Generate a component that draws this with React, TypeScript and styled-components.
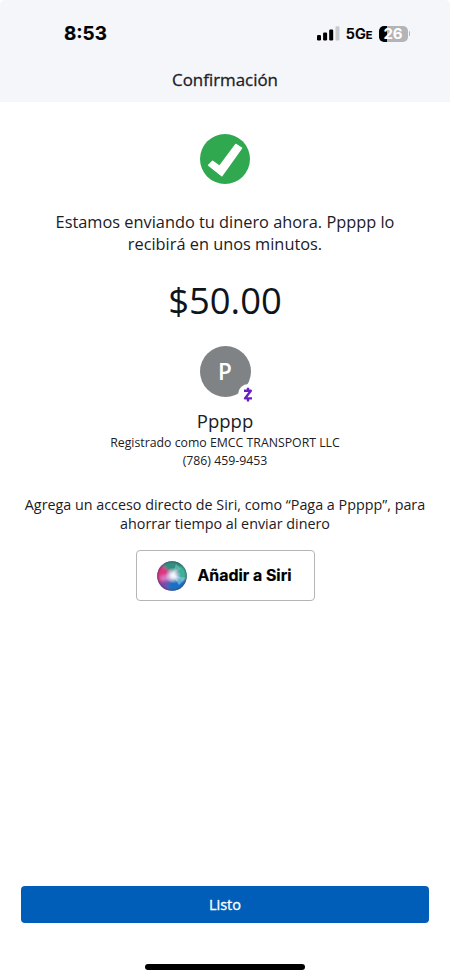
import React from "react";
import styled, { createGlobalStyle } from "styled-components";

const GlobalStyle = createGlobalStyle`
  * {
    box-sizing: border-box;
  }

  body {
    margin: 0;
    background: #ffffff;
    color: #1b2026;
    font-family: "Open Sans", "Noto Sans", sans-serif;
  }
`;

const Screen = styled.div`
  display: flex;
  flex-direction: column;
  width: 450px;
  height: 978px;
  background: #ffffff;
  overflow: hidden;
`;

const Header = styled.header`
  height: 102px;
  background: #f5f6fa;
  border-radius: 5px 5px 0 0;
`;

const StatusBar = styled.div`
  display: flex;
  align-items: center;
  justify-content: space-between;
  height: 67px;
  padding: 0 40px 0 64px;
  color: #000000;
  font-family: Inter, sans-serif;
`;

const Time = styled.span`
  font-size: 18.9px;
  font-weight: 700;
  line-height: 22px;
  -webkit-text-stroke: 0.2px currentColor;
`;

const StatusIcons = styled.div`
  display: flex;
  align-items: center;
`;

const Network = styled.span`
  margin: 1px 6px 0 6px;
  font-size: 14.5px;
  font-weight: 600;
  line-height: 16px;
  -webkit-text-stroke: 0.2px currentColor;

  small {
    font-size: 11px;
    font-weight: 700;
  }
`;

const Battery = styled.div`
  display: flex;
  align-items: center;
  justify-content: center;
  width: 29px;
  height: 16px;
  border-radius: 5px;
  background: linear-gradient(to right, #000000 8px, #b3b4b7 8px);
  color: #ffffff;
  font-size: 15px;
  font-weight: 700;
  line-height: 16px;
`;

const BatteryTip = styled.div`
  width: 1.5px;
  height: 5px;
  margin-left: 1px;
  border-radius: 0 2px 2px 0;
  background: #b3b4b7;
`;

const Title = styled.h1`
  margin: 2px 0 0;
  font-size: 16.9px;
  font-weight: 400;
  line-height: 22px;
  text-align: center;
  -webkit-text-stroke: 0.3px currentColor;
`;

const Content = styled.main`
  display: flex;
  flex: 1;
  flex-direction: column;
  align-items: center;
  padding-top: 32px;
  text-align: center;
`;

const Message = styled.p`
  width: 370px;
  margin: 27px 0 0;
  font-size: 16.35px;
  line-height: 22px;
`;

const Amount = styled.div`
  margin-top: 20px;
  color: #0e141b;
  font-size: 36.4px;
  line-height: 50px;
`;

const Avatar = styled.div`
  position: relative;
  display: flex;
  align-items: center;
  justify-content: center;
  width: 51px;
  height: 51px;
  margin-top: 21px;
  border-radius: 50%;
  background: #808386;
  color: #ffffff;
  font-size: 22.5px;
  font-weight: 600;
`;

const AvatarBadge = styled.div`
  position: absolute;
  right: -8px;
  bottom: -8px;
  display: flex;
  align-items: center;
  justify-content: center;
  width: 21px;
  height: 21px;
  border-radius: 50%;
  background: #ffffff;
`;

const Name = styled.h2`
  margin: 12px 0 1px;
  font-size: 18.5px;
  font-weight: 400;
  line-height: 24px;
`;

const Detail = styled.div`
  font-size: 12.3px;
  line-height: 18px;
`;

const Hint = styled.p`
  width: 420px;
  margin: 25px 0 17px;
  font-size: 14.33px;
  line-height: 19px;
`;

const SiriButton = styled.button`
  display: flex;
  align-items: center;
  justify-content: center;
  gap: 10px;
  width: 179px;
  height: 51px;
  padding: 0 1px 0 0;
  border: 1px solid #b4b5b7;
  border-radius: 4px;
  background: #ffffff;
  color: #000000;
  font-family: Inter, sans-serif;
  font-size: 15.9px;
  font-weight: 700;
  -webkit-text-stroke: 0.2px currentColor;
`;

const Footer = styled.footer`
  display: flex;
  flex-direction: column;
  align-items: center;
  gap: 41px;
  padding: 0 21px 8.5px;
`;

const DoneButton = styled.button`
  width: 100%;
  height: 37px;
  padding: 0;
  border: 0;
  border-radius: 4px;
  background: #005eb8;
  color: #ffffff;
  font-family: inherit;
  font-size: 14.5px;
  font-weight: 400;
  -webkit-text-stroke: 0.3px currentColor;
`;

const HomeIndicator = styled.div`
  width: 160px;
  height: 5.5px;
  border-radius: 3px;
  background: #000000;
`;

const SignalIcon = () => (
  <svg width="23" height="15" viewBox="0 0 23 15">
    <rect x="0" y="9" width="4" height="5.5" rx="1.2" />
    <rect x="6.1" y="6.5" width="4" height="8" rx="1.2" />
    <rect x="12.2" y="3.5" width="4" height="11" rx="1.2" />
    <rect x="18.5" y="0.3" width="4" height="14.2" rx="1.2" fill="#c9cacd" />
  </svg>
);

const CheckIcon = () => (
  <svg width="50" height="50" viewBox="0 0 50 50">
    <circle cx="25" cy="25" r="25" fill="#2fa84f" />
    <path
      d="M8.6 31.2 L12.6 27.2 L19.6 32.2 L35.8 10.4 L41.6 14 L21.8 41.8 Z"
      fill="#ffffff"
      stroke="#ffffff"
      strokeWidth="1.4"
      strokeLinejoin="round"
    />
  </svg>
);

const ZelleIcon = () => (
  <svg width="10" height="16" viewBox="0 0 10 16">
    <path
      d="M1 3.8 H7.8 L2 11.4 H9 M5 0.8 V3.6 M5 11.8 V14.6"
      fill="none"
      stroke="#6a1fc4"
      strokeWidth="2.4"
      strokeLinejoin="round"
    />
  </svg>
);

const SiriIcon = () => (
  <svg width="30" height="30" viewBox="0 0 30 30">
    <defs>
      <clipPath id="orb">
        <circle cx="15" cy="15" r="14.8" />
      </clipPath>
      <filter id="soft" x="-50%" y="-50%" width="200%" height="200%">
        <feGaussianBlur stdDeviation="1.8" />
      </filter>
      <radialGradient id="glow">
        <stop offset="0" stopColor="#ffffff" />
        <stop offset="0.35" stopColor="#ffffff" stopOpacity="0.8" />
        <stop offset="1" stopColor="#ffffff" stopOpacity="0" />
      </radialGradient>
      <radialGradient id="rim">
        <stop offset="0.82" stopColor="#30345c" stopOpacity="0" />
        <stop offset="1" stopColor="#30345c" stopOpacity="0.45" />
      </radialGradient>
    </defs>
    <g clipPath="url(#orb)">
      <rect width="30" height="30" fill="#5b64a8" />
      <g filter="url(#soft)">
        <ellipse cx="4" cy="13" rx="8" ry="9" fill="#dc3580" />
        <ellipse cx="17" cy="4" rx="11" ry="6" fill="#318f80" />
        <ellipse cx="26" cy="12" rx="5" ry="8" fill="#3bb396" />
        <ellipse cx="8" cy="25" rx="8" ry="5" fill="#7a4ba8" />
        <ellipse cx="20" cy="25" rx="10" ry="6" fill="#1b70c4" />
        <ellipse cx="8" cy="17" rx="5" ry="3" fill="#d07cc4" />
      </g>
      <path d="M15 14 L29 17 L22 24 Z" fill="#8fd5ee" opacity="0.55" />
      <path d="M15 14 L19 3 L24 8 Z" fill="#9ce0cf" opacity="0.4" />
      <circle cx="16" cy="14.5" r="8" fill="url(#glow)" />
      <circle cx="15" cy="15" r="15" fill="url(#rim)" />
    </g>
  </svg>
);

const App: React.FC = () => {
  return (
    <>
      <GlobalStyle />
      <Screen>
        <Header>
          <StatusBar>
            <Time>8:53</Time>
            <StatusIcons>
              <SignalIcon />
              <Network>
                5G<small>E</small>
              </Network>
              <Battery>26</Battery>
              <BatteryTip />
            </StatusIcons>
          </StatusBar>
          <Title>Confirmación</Title>
        </Header>
        <Content>
          <CheckIcon />
          <Message>
            Estamos enviando tu dinero ahora. Ppppp lo
            <br />
            recibirá en unos minutos.
          </Message>
          <Amount>$50.00</Amount>
          <Avatar>
            P
            <AvatarBadge>
              <ZelleIcon />
            </AvatarBadge>
          </Avatar>
          <Name>Ppppp</Name>
          <Detail>Registrado como EMCC TRANSPORT LLC</Detail>
          <Detail>(786) 459-9453</Detail>
          <Hint>
            Agrega un acceso directo de Siri, como “Paga a Ppppp”, para
            <br />
            ahorrar tiempo al enviar dinero
          </Hint>
          <SiriButton>
            <SiriIcon />
            Añadir a Siri
          </SiriButton>
        </Content>
        <Footer>
          <DoneButton>Listo</DoneButton>
          <HomeIndicator />
        </Footer>
      </Screen>
    </>
  );
};

export default App;
